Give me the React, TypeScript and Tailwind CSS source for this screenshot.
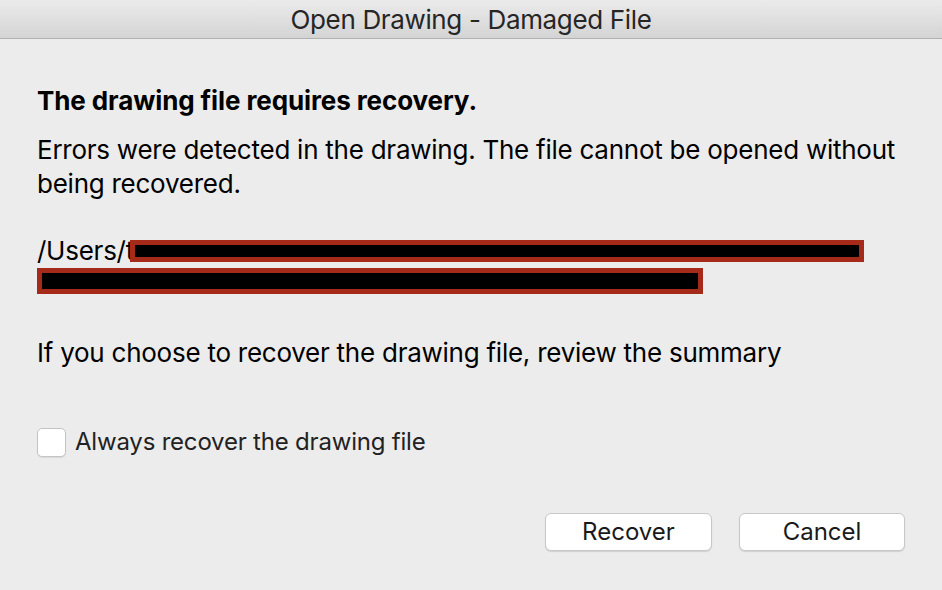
export default function App() {
  return (
    <div
      className="w-[942px] h-[590px] bg-[#ececec] flex flex-col overflow-hidden text-[#1a1a1a]"
      style={{ fontFamily: 'Inter, "Liberation Sans", Arial, sans-serif' }}
    >
      <div className="h-[39px] shrink-0 flex items-center justify-center bg-gradient-to-b from-[#ebebeb] to-[#d4d4d4] border-b border-[#b1b1b1]">
        <span className="text-[26px] tracking-[-0.35px] text-[#262626]">Open Drawing - Damaged File</span>
      </div>

      <div className="flex flex-col pl-[37px] pr-[30px]">
        <h1 className="mt-[48px] text-[26px] font-bold leading-[28px] tracking-[-0.1px] text-black">
          The drawing file requires recovery.
        </h1>
        <p className="mt-[18px] text-[26px] leading-[34px] tracking-[-0.25px] text-black">
          Errors were detected in the drawing. The file cannot be opened without being recovered.
        </p>

        <div className="mt-[34px] text-[26px] leading-[31px] tracking-[-0.25px] text-black">
          <div className="flex items-center">
            <span>/Users/t</span>
            <div className="relative -ml-[4px] w-[734px] h-[22px] border-[5px] border-[#a52a1a] bg-black" />
          </div>
          <div className="mt-[2px] w-[666px] h-[26px] border-[5px] border-[#a52a1a] bg-black" />
        </div>

        <p className="mt-[42px] text-[26px] leading-[34px] tracking-[-0.25px] text-black">
          If you choose to recover the drawing file, review the summary
        </p>

        <label className="mt-[54px] flex items-center gap-[9px]">
          <span className="w-[29px] h-[29px] rounded-[5px] bg-white border border-[#c4c4c4] shadow-[0_1px_1px_rgba(0,0,0,0.08)]" />
          <span className="text-[24px] tracking-[-0.2px] text-[#222]">Always recover the drawing file</span>
        </label>

        <div className="mt-[53px] flex justify-end gap-[27px] pr-[7px]">
          <button className="w-[167px] h-[38px] rounded-[6px] bg-white border border-[#c8c8c8] shadow-[0_1px_1px_rgba(0,0,0,0.12)] text-[24px] text-[#1a1a1a]">
            Recover
          </button>
          <button className="w-[166px] h-[38px] rounded-[6px] bg-white border border-[#c8c8c8] shadow-[0_1px_1px_rgba(0,0,0,0.12)] text-[24px] text-[#1a1a1a]">
            Cancel
          </button>
        </div>
      </div>
    </div>
  );
}
